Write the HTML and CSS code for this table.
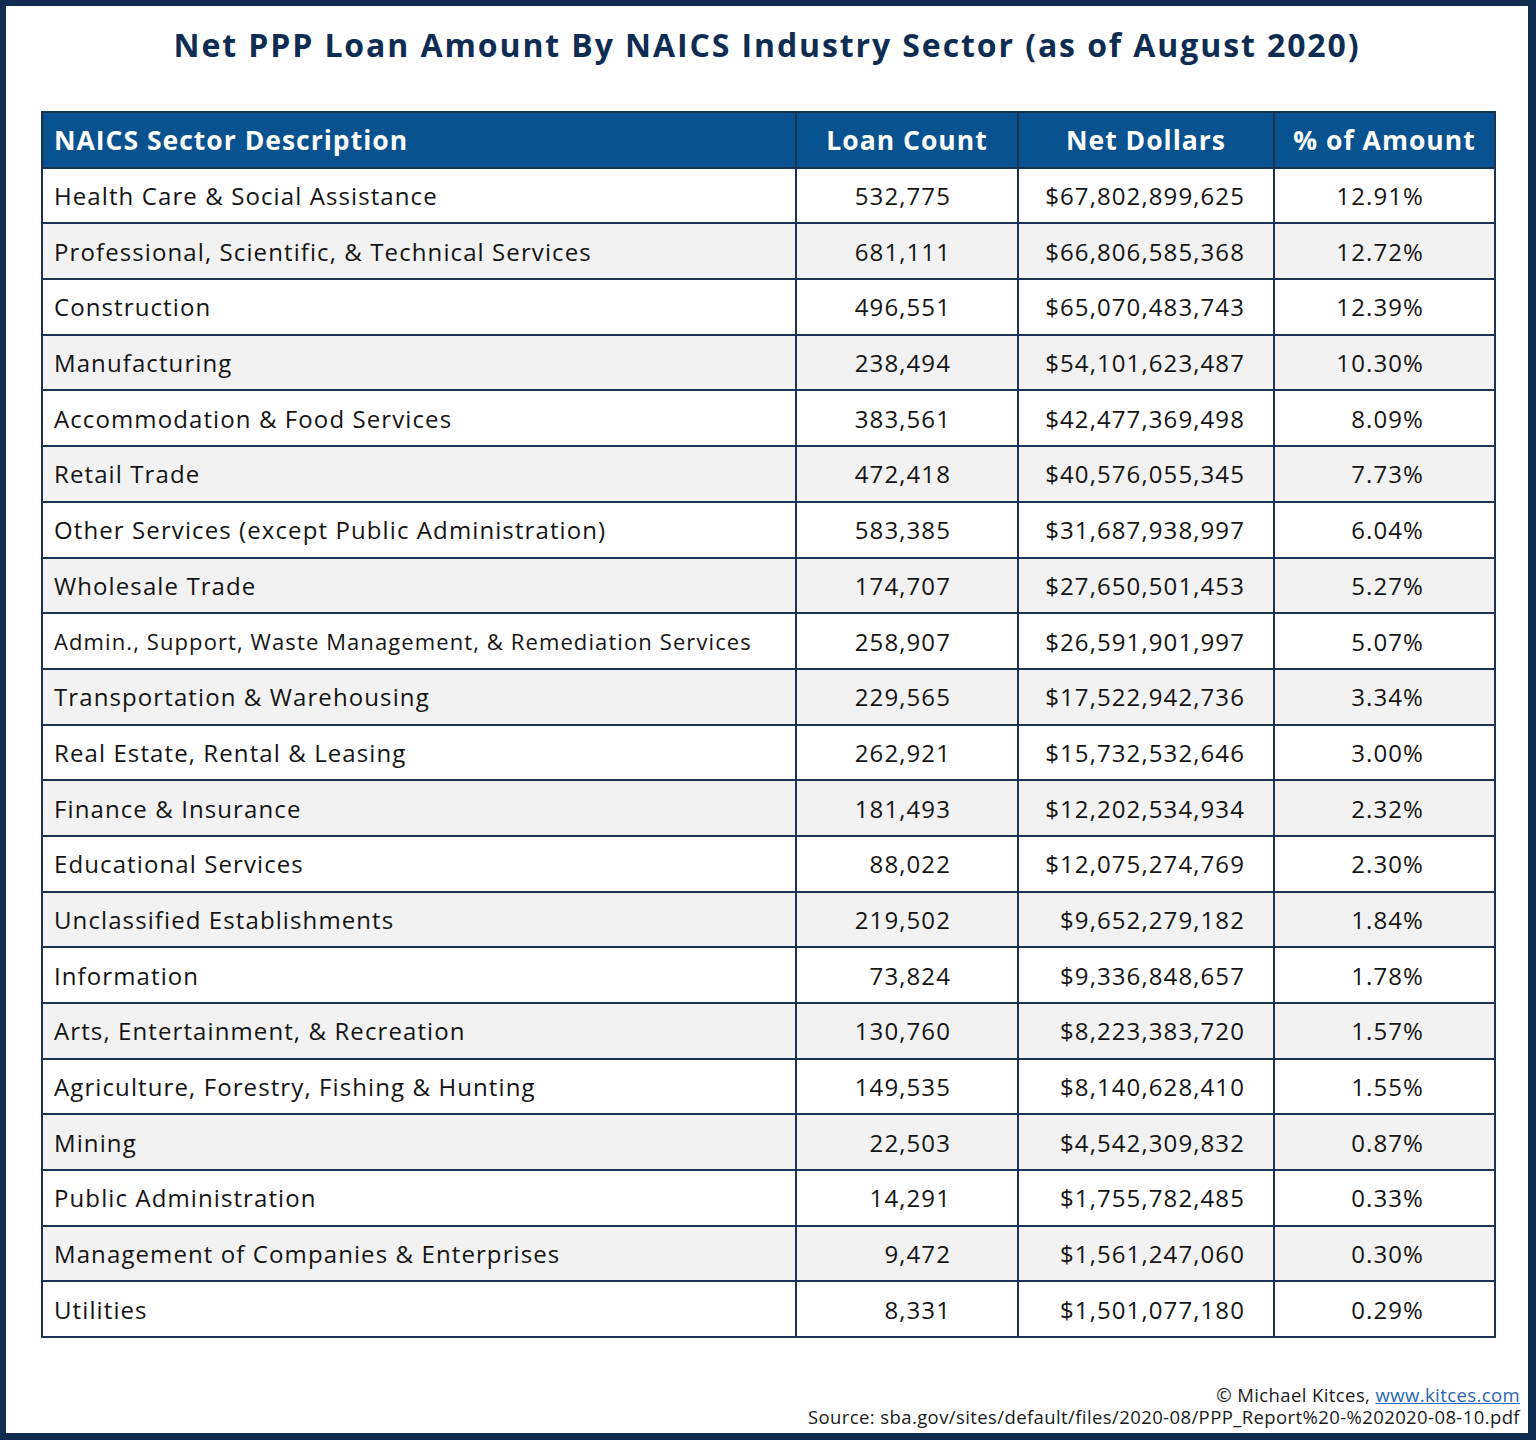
FILE: index.html
```html
<!DOCTYPE html>
<html>
<head>
<meta charset="utf-8">
<link rel="stylesheet" href="styles.css">
</head>
<body>
<div class="frame">
  <h1 class="title">Net PPP Loan Amount By NAICS Industry Sector (as of August 2020)</h1>
  <table class="data">
    <colgroup>
      <col class="c1"><col class="c2"><col class="c3"><col class="c4">
    </colgroup>
    <thead>
      <tr><th class="left">NAICS Sector Description</th><th>Loan Count</th><th>Net Dollars</th><th>% of Amount</th></tr>
    </thead>
    <tbody>
      <tr><td>Health Care &amp; Social Assistance</td><td class="n cnt">532,775</td><td class="n usd">$67,802,899,625</td><td class="n pct">12.91%</td></tr>
      <tr><td>Professional, Scientific, &amp; Technical Services</td><td class="n cnt">681,111</td><td class="n usd">$66,806,585,368</td><td class="n pct">12.72%</td></tr>
      <tr><td>Construction</td><td class="n cnt">496,551</td><td class="n usd">$65,070,483,743</td><td class="n pct">12.39%</td></tr>
      <tr><td>Manufacturing</td><td class="n cnt">238,494</td><td class="n usd">$54,101,623,487</td><td class="n pct">10.30%</td></tr>
      <tr><td>Accommodation &amp; Food Services</td><td class="n cnt">383,561</td><td class="n usd">$42,477,369,498</td><td class="n pct">8.09%</td></tr>
      <tr><td>Retail Trade</td><td class="n cnt">472,418</td><td class="n usd">$40,576,055,345</td><td class="n pct">7.73%</td></tr>
      <tr><td>Other Services (except Public Administration)</td><td class="n cnt">583,385</td><td class="n usd">$31,687,938,997</td><td class="n pct">6.04%</td></tr>
      <tr><td>Wholesale Trade</td><td class="n cnt">174,707</td><td class="n usd">$27,650,501,453</td><td class="n pct">5.27%</td></tr>
      <tr><td class="small">Admin., Support, Waste Management, &amp; Remediation Services</td><td class="n cnt">258,907</td><td class="n usd">$26,591,901,997</td><td class="n pct">5.07%</td></tr>
      <tr><td>Transportation &amp; Warehousing</td><td class="n cnt">229,565</td><td class="n usd">$17,522,942,736</td><td class="n pct">3.34%</td></tr>
      <tr><td>Real Estate, Rental &amp; Leasing</td><td class="n cnt">262,921</td><td class="n usd">$15,732,532,646</td><td class="n pct">3.00%</td></tr>
      <tr><td>Finance &amp; Insurance</td><td class="n cnt">181,493</td><td class="n usd">$12,202,534,934</td><td class="n pct">2.32%</td></tr>
      <tr><td>Educational Services</td><td class="n cnt">88,022</td><td class="n usd">$12,075,274,769</td><td class="n pct">2.30%</td></tr>
      <tr><td>Unclassified Establishments</td><td class="n cnt">219,502</td><td class="n usd">$9,652,279,182</td><td class="n pct">1.84%</td></tr>
      <tr><td>Information</td><td class="n cnt">73,824</td><td class="n usd">$9,336,848,657</td><td class="n pct">1.78%</td></tr>
      <tr><td>Arts, Entertainment, &amp; Recreation</td><td class="n cnt">130,760</td><td class="n usd">$8,223,383,720</td><td class="n pct">1.57%</td></tr>
      <tr><td>Agriculture, Forestry, Fishing &amp; Hunting</td><td class="n cnt">149,535</td><td class="n usd">$8,140,628,410</td><td class="n pct">1.55%</td></tr>
      <tr><td>Mining</td><td class="n cnt">22,503</td><td class="n usd">$4,542,309,832</td><td class="n pct">0.87%</td></tr>
      <tr><td>Public Administration</td><td class="n cnt">14,291</td><td class="n usd">$1,755,782,485</td><td class="n pct">0.33%</td></tr>
      <tr><td>Management of Companies &amp; Enterprises</td><td class="n cnt">9,472</td><td class="n usd">$1,561,247,060</td><td class="n pct">0.30%</td></tr>
      <tr><td>Utilities</td><td class="n cnt">8,331</td><td class="n usd">$1,501,077,180</td><td class="n pct">0.29%</td></tr>
    </tbody>
  </table>
  <div class="footer">
    <div class="fline">© Michael Kitces, <a class="link" href="#">www.kitces.com</a></div>
    <div class="fline">Source: sba.gov/sites/default/files/2020-08/PPP_Report%20-%202020-08-10.pdf</div>
  </div>
</div>
</body>
</html>
```
FILE: styles.css
```css
html, body {
  margin: 0;
  padding: 0;
  background: #ffffff;
}
.frame {
  box-sizing: border-box;
  width: 1536px;
  height: 1440px;
  border-style: solid;
  border-color: #0f2b4f;
  border-width: 6px 8px 7px 6px;
  padding: 0 0 0 35px;
  font-family: "Open Sans", "DejaVu Sans", sans-serif;
  color: #1a1a1a;
  display: flex;
  flex-direction: column;
}
.title {
  margin: 19px 0 0 -35px;
  height: 40px;
  line-height: 40px;
  text-align: center;
  font-size: 32px;
  font-weight: 700;
  color: #0f2d52;
  letter-spacing: 1.9px;
}
.data {
  margin-top: 46px;
  width: 1453px;
  border-collapse: collapse;
  table-layout: fixed;
  border: 2px solid #1b3456;
}
.c1 { width: 754px; }
.c2 { width: 222px; }
.c3 { width: 256px; }
.c4 { width: 221px; }
.data th, .data td {
  border: 2px solid #1b3456;
  height: 53.7px;
  padding: 0 11px;
  white-space: nowrap;
}
.data th {
  background: #08528f;
  color: #ffffff;
  font-size: 26.5px;
  font-weight: 700;
  letter-spacing: 1px;
  text-align: center;
}
.data th.left { text-align: left; }
.data td {
  font-size: 24px;
  color: #141414;
  letter-spacing: 1.1px;
}
.data td.small { font-size: 22px; letter-spacing: 1.1px; }
.data tbody tr:nth-child(even) td { background: #f2f2f2; }
.data td.n { text-align: right; }
.data td.cnt { padding-right: 66px; }
.data td.usd { padding-right: 28px; }
.data td.pct { padding-right: 70px; }
.footer {
  margin-top: auto;
  margin-bottom: 6px;
  padding-right: 8px;
  display: flex;
  flex-direction: column;
  align-items: flex-end;
  gap: 1px;
  font-size: 18.5px;
  letter-spacing: 0.4px;
  color: #1a1a1a;
}
.fline {
  line-height: 21px;
  height: 21px;
  overflow: visible;
}
.link {
  color: #2867b4;
  text-decoration: underline;
}
```
